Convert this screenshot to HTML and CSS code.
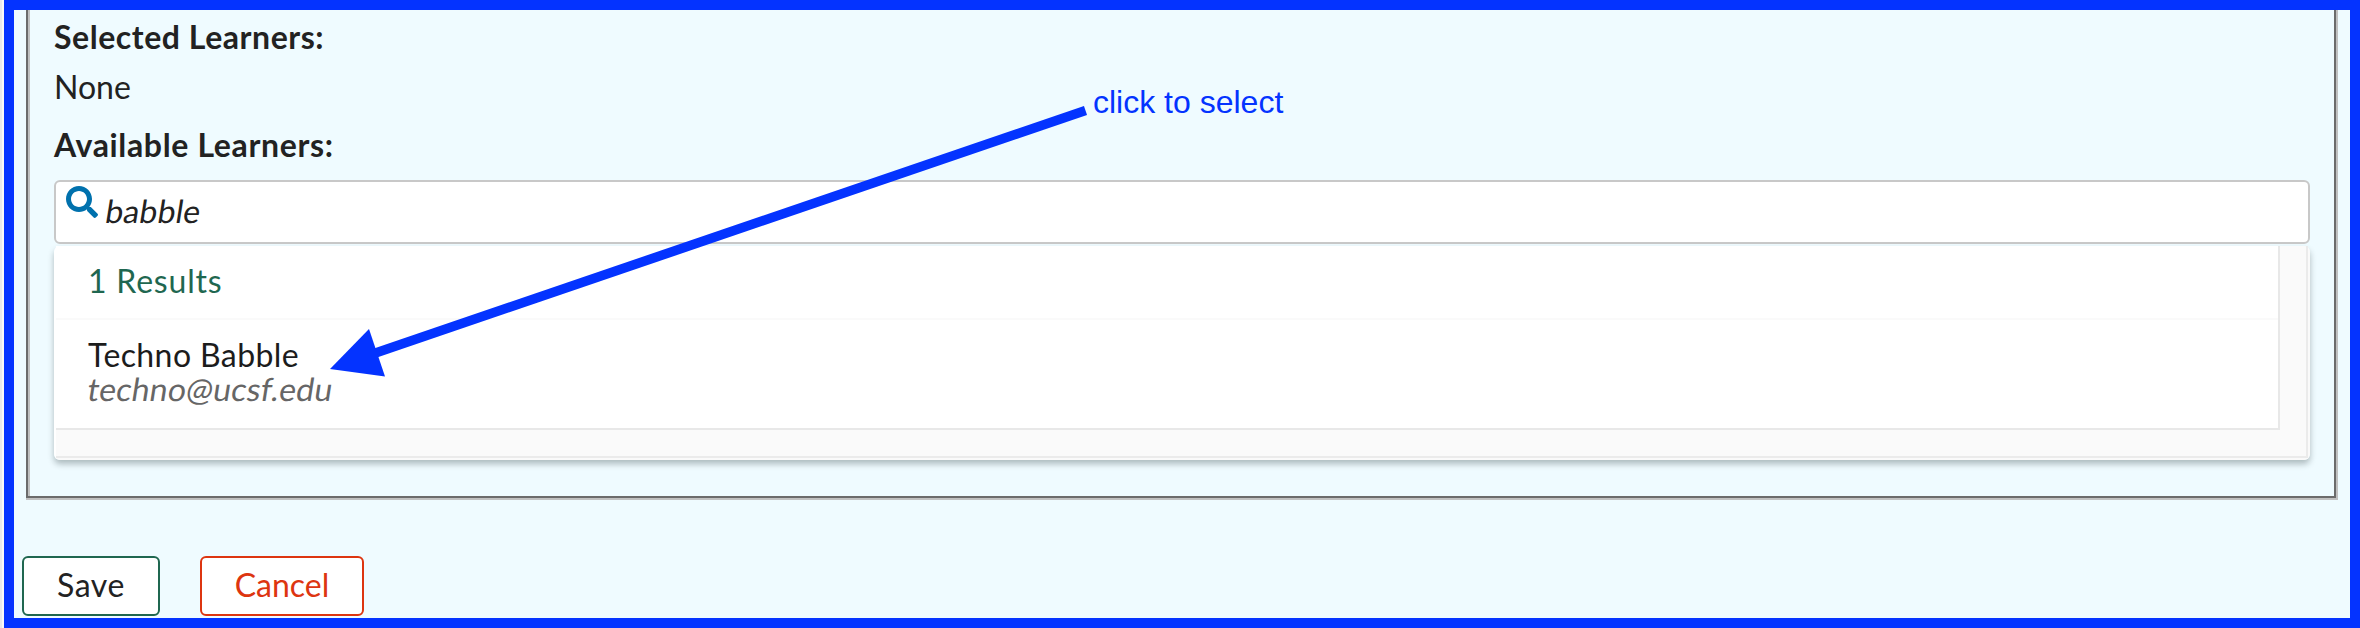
FILE: index.html
```html
<!DOCTYPE html>
<html lang="en">
<head>
<meta charset="utf-8">
<title>Learners</title>
<link rel="stylesheet" href="styles.css">
</head>
<body>
<main class="frame">
  <section class="picker">
    <h2 class="heading selected">Selected Learners:</h2>
    <p class="none">None</p>
    <h2 class="heading available">Available Learners:</h2>
    <div class="search">
      <svg class="search-icon" viewBox="0 0 512 512"><path d="M505 442.700L405.300 343c-4.500-4.500-10.600-7-17-7H372c27.600-35.300 44-79.700 44-128C416 93.100 322.900 0 208 0S0 93.100 0 208s93.100 208 208 208c48.300 0 92.700-16.400 128-44v16.300c0 6.400 2.500 12.500 7 17l99.700 99.700c9.400 9.400 24.600 9.400 33.900 0l28.300-28.300c9.400-9.400 9.400-24.600.1-34zM208 336c-70.700 0-128-57.200-128-128 0-70.700 57.200-128 128-128 70.700 0 128 57.200 128 128 0 70.700-57.200 128-128 128z"/></svg>
      <span class="query">babble</span>
    </div>
    <div class="results">
      <div class="scroller">
        <div class="list">
          <div class="count">1 Results</div>
          <div class="result">
            <div class="name">Techno Babble</div>
            <div class="email">techno@ucsf.edu</div>
          </div>
        </div>
      </div>
    </div>
  </section>
  <div class="actions">
    <button class="button save">Save</button>
    <button class="button cancel">Cancel</button>
  </div>
</main>
<svg class="arrow" viewBox="0 0 2360 628"><path d="M374 353.500L1085.500 110.500" stroke="#0433ff" stroke-width="9.500"/><path d="M330 369L369 329L385 376.500Z" fill="#0433ff"/></svg>
<div class="note">click to select</div>
</body>
</html>
```
FILE: styles.css
```css
* { box-sizing: border-box; }
body {
  margin: 0;
  width: 2360px;
  height: 628px;
  overflow: hidden;
  position: relative;
  padding-left: 4px;
  background: linear-gradient(90deg, #e9e9e9 2px, #f8f8f8 2px, #f8f8f8 4px, #fff 4px);
  color: #222;
  font: 32px/40px Lato, "Open Sans", sans-serif;
}
h2, p { margin: 0; }
.frame {
  height: 628px;
  border: 10px solid #0433ff;
  background: #effbff;
}
.picker {
  width: 2310px;
  height: 488px;
  margin: 0 12px;
  padding: 7px 24px 0 26px;
  border: solid #6b6b6b;
  border-width: 0 2px 2px;
  box-shadow: inset 2px 0 #c0c0c0, 2px 0 #c0c0c0, 0 2px #c0c0c0, 2px 2px #c0c0c0;
}
.heading { font-size: 32px; font-weight: 700; height: 50px; }
.none { height: 58px; }
.available { height: 55px; letter-spacing: .65px; }
.selected { letter-spacing: .55px; }
.search {
  display: flex;
  width: 2256px;
  height: 64px;
  border: 2px solid #c8c8c8;
  border-radius: 6px;
  background: #fff;
  padding: 4px 10px;
}
.search-icon { width: 32px; height: 32px; fill: #0071ad; }
.query {
  height: 40px;
  margin: 5px 0 0 8px;
  letter-spacing: .1px;
  transform: skewX(-9deg);
}
.results {
  width: 2256px;
  height: 214px;
  margin-top: 2px;
  padding: 0 2px 2px;
  border-radius: 6px;
  background: linear-gradient(90deg, #fff 2px, #fafafa 2px);
  box-shadow: 0 4px 6px rgba(0, 20, 20, .28);
}
.scroller { height: 212px; border: solid #ebebeb; border-width: 0 2px 2px 0; }
.list {
  width: 2224px;
  height: 184px;
  border: solid #e8e8e8;
  border-width: 0 2px 2px 0;
  background: #fff;
}
.count {
  height: 74px;
  padding: 15px 0 0 32px;
  border-bottom: 2px solid #fafafa;
  color: #1f6750;
  letter-spacing: .8px;
}
.result { padding: 18px 0 0 32px; line-height: 34px; }
.name { color: #1c1c1c; letter-spacing: .4px; }
.email { width: max-content; color: #666; letter-spacing: .2px; transform: skewX(-9deg); }
.actions { display: flex; gap: 40px; margin: 58px 0 0 8px; }
.button {
  height: 60px;
  padding: 0 0 3px;
  border: 2px solid #1f6750;
  border-radius: 6px;
  background: #fff;
  color: #222;
  font: inherit;
}
.save { width: 138px; letter-spacing: .6px; }
.cancel { width: 164px; border-color: #dd3510; color: #dd3510; }
.arrow { position: absolute; left: 0; top: 0; width: 2360px; height: 628px; }
.note {
  position: absolute;
  left: 1093px;
  top: 82px;
  color: #0433ff;
  font-family: "Liberation Sans", Arial, sans-serif;
  white-space: nowrap;
}
```
